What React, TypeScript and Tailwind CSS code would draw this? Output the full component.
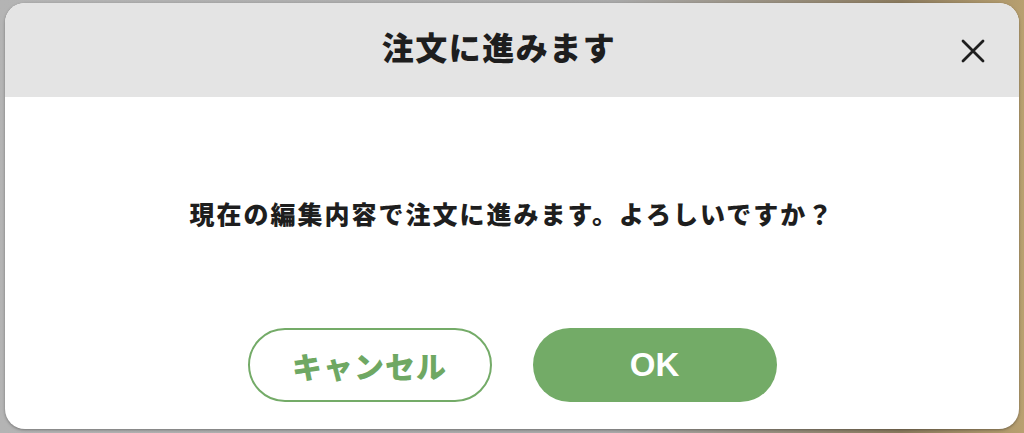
export default function App() {
  return (
    <div className="h-[433px] w-full bg-[#a9a9a9] bg-[linear-gradient(90deg,#b4b4b4_0%,#a9a9a9_60%,#8a7a5e_88%,#b8a070_100%)] pl-[5px] pr-[5px] pt-[3px] font-['Noto_Sans_CJK_JP',sans-serif]">
      <div className="flex h-[426px] w-[1014px] flex-col overflow-hidden rounded-[20px] bg-white shadow-[0_1px_3px_rgba(0,0,0,0.35)]">
        <div className="relative flex h-[94px] shrink-0 items-center justify-center bg-[#e4e4e4] pb-[8px]">
          <h2 className="mr-[26px] text-[32px] font-black leading-none tracking-[1.5px] text-[#1e1e1e]">注文に進みます</h2>
          <button className="absolute right-[34px] top-[36px] flex h-[24px] w-[24px] items-center justify-center text-[#1e1e1e]" aria-label="閉じる">
            <svg width="24" height="24" viewBox="0 0 24 24" fill="none" stroke="currentColor" strokeWidth="2.8" strokeLinecap="round">
              <path d="M2 2L22 22M22 2L2 22" />
            </svg>
          </button>
        </div>
        <div className="flex flex-1 flex-col items-center pt-[98px]">
          <p className="text-[25px] font-black leading-[36px] tracking-[2px] text-[#1e1e1e]">
            現在の編集内容で注文に進みます。よろしいですか？
          </p>
          <div className="mt-[97px] flex gap-[41px]">
            <button className="flex h-[74px] w-[244px] items-center justify-center rounded-full border-2 border-[#74ab68] bg-white text-[30px] font-black tracking-[1px] text-[#6fa863]">
              キャンセル
            </button>
            <button className="flex h-[74px] w-[244px] items-center justify-center rounded-full bg-[#73ab67] font-['Liberation_Sans','Noto_Sans_CJK_JP',sans-serif] text-[33px] font-bold text-white">
              OK
            </button>
          </div>
        </div>
      </div>
    </div>
  );
}
